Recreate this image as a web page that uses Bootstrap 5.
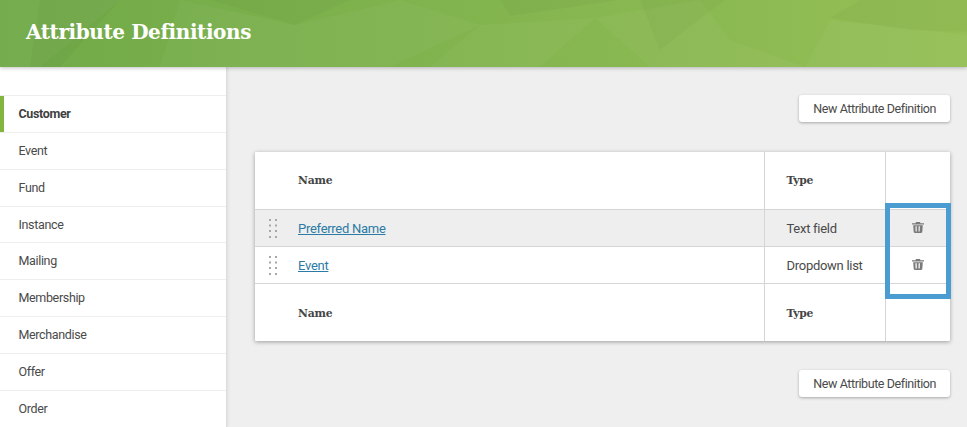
<!DOCTYPE html>
<html lang="en"><head><meta charset="utf-8"><title>Attribute Definitions</title>
<link href="https://cdn.jsdelivr.net/npm/bootstrap@5.3.0/dist/css/bootstrap.min.css" rel="stylesheet">
<style>
html,body{height:427px;overflow:hidden}
body{background:#efefef;font-family:Roboto,sans-serif;font-size:13px;color:#4a4a4a}
.hero{height:67px;position:relative;overflow:hidden;background:linear-gradient(90deg,#70aa48,#95bf55);box-shadow:0 1px 4px rgba(0,0,0,.25);z-index:3}
.hero svg{position:absolute;inset:0}
.hero h1{position:relative;margin:0;padding:17px 0 0 26px;font:700 20px/30px "DejaVu Serif",serif;color:#fff;letter-spacing:-.41px;white-space:nowrap}
.shell{height:360px;overflow:hidden}
.side{width:227px;flex:none;background:#fff;border-right:1px solid #ddd;box-shadow:1px 0 3px rgba(0,0,0,.08);padding-top:28px}
.side .list-group-item{height:36.86px;padding:0 0 0 18.5px;line-height:36.5px;font-size:12.5px;letter-spacing:-.35px;color:#4a4a4a;border:0;border-top:1px solid #eee;border-radius:0;background:#fff}
.side .list-group-item.now{font-weight:700;color:#3f3f3f;box-shadow:inset 4px 0 0 #82b440}
.main{flex:1;padding:28px 17px 0 28px;position:relative}
.act{height:27px;padding:0 14px;font:12.5px/27px Roboto,sans-serif;letter-spacing:-.41px;color:#4a4a4a;background:#fff;border:0;border-radius:3px;box-shadow:0 1px 3px rgba(0,0,0,.3)}
.sheet{margin:30px 0 29px;background:#fff;box-shadow:0 1px 4px rgba(0,0,0,.35);border-radius:1px}
.sheet .table{margin:0;--bs-table-bg:transparent;border-collapse:collapse;table-layout:fixed;color:#4a4a4a;font-size:13px;letter-spacing:-.28px}
.sheet th,.sheet td{padding:3px 0 0;border:0;border-left:1px solid #d5d5d5;vertical-align:middle;background:transparent;box-shadow:none}
.sheet tr>*:first-child,.sheet tr>*:nth-child(2){border-left:0}
.sheet thead tr{height:57px;border-bottom:1px solid #d5d5d5}
.sheet tfoot tr{height:58px}
.sheet tbody tr{height:37px;border-bottom:1px solid #d5d5d5}
.sheet th{padding-top:1px;font:700 10.8px "DejaVu Serif",serif;color:#444;letter-spacing:-.2px}
.sheet tfoot th{padding-top:2px}
.sheet tr>*:nth-child(3){padding-left:22px}
.sheet tbody tr.lit{background:#eee}
.sheet a{color:#2b7ba5}
.bin{display:block;margin:-4px auto 0}
.grip{display:block;margin:-1px auto 0 14px}
.mark-box{position:absolute;left:658px;top:136px;width:66px;height:96px;border:5px solid #4b9cd0;pointer-events:none}
</style></head>
<body>
<header class="hero">
<svg width="967" height="67" viewBox="0 0 967 67" aria-hidden="true">
<g fill="#fff" fill-opacity=".035">
<polygon points="0,0 120,0 40,67 0,67"/><polygon points="180,0 295,25 270,67 160,67"/>
<polygon points="295,25 400,0 480,25 390,67 270,67"/><polygon points="595,18 700,0 730,40 805,67 650,67"/>
<polygon points="830,20 967,35 967,67 805,67"/><polygon points="480,25 595,18 540,67 430,67"/>
</g>
<g fill="#000" fill-opacity=".025">
<polygon points="210,0 350,0 295,25"/><polygon points="500,0 620,0 510,16"/><polygon points="640,0 725,0 660,50"/>
<polygon points="860,0 967,0 967,32 910,30 830,18"/><polygon points="40,0 120,0 60,67 30,67"/>
</g>
</svg>
<h1>Attribute Definitions</h1>
</header>
<div class="d-flex shell">
<nav class="side">
<div class="list-group">
<a class="list-group-item now" href="#">Customer</a>
<a class="list-group-item" href="#">Event</a>
<a class="list-group-item" href="#">Fund</a>
<a class="list-group-item" href="#">Instance</a>
<a class="list-group-item" href="#">Mailing</a>
<a class="list-group-item" href="#">Membership</a>
<a class="list-group-item" href="#">Merchandise</a>
<a class="list-group-item" href="#">Offer</a>
<a class="list-group-item" href="#">Order</a>
</div>
</nav>
<main class="main">
<div class="d-flex justify-content-end"><button class="btn act" type="button">New Attribute Definition</button></div>
<div class="sheet">
<table class="table">
<colgroup><col style="width:43px"><col style="width:466px"><col style="width:121px"><col></colgroup>
<thead><tr><th></th><th>Name</th><th>Type</th><th></th></tr></thead>
<tbody>
<tr class="lit"><td><svg class="grip" width="8" height="19" viewBox="0 0 8 19" fill="#a8a8a8"><rect x="0" y="0" width="2" height="2"/><rect x="6" y="0" width="2" height="2"/><rect x="0" y="5.5" width="2" height="2"/><rect x="6" y="5.5" width="2" height="2"/><rect x="0" y="11" width="2" height="2"/><rect x="6" y="11" width="2" height="2"/><rect x="0" y="17" width="2" height="2"/><rect x="6" y="17" width="2" height="2"/></svg></td><td><a href="#">Preferred Name</a></td><td>Text field</td><td><svg class="bin" width="12" height="11" viewBox="0 0 12 11" fill="#7a7a7a"><path d="M4 0h4l.5 1.2H12v1.4H0V1.2h3.5zM1.2 3.2h9.6l-.5 6.6c0 .7-.5 1.2-1.2 1.2H2.9c-.7 0-1.2-.5-1.2-1.2zm2.2 1 .2 5.4h1.2l-.1-5.4zm3.2 0-.1 5.4h1.2l.2-5.4z"/></svg></td></tr>
<tr><td><svg class="grip" width="8" height="19" viewBox="0 0 8 19" fill="#a8a8a8"><rect x="0" y="0" width="2" height="2"/><rect x="6" y="0" width="2" height="2"/><rect x="0" y="5.5" width="2" height="2"/><rect x="6" y="5.5" width="2" height="2"/><rect x="0" y="11" width="2" height="2"/><rect x="6" y="11" width="2" height="2"/><rect x="0" y="17" width="2" height="2"/><rect x="6" y="17" width="2" height="2"/></svg></td><td><a href="#">Event</a></td><td>Dropdown list</td><td><svg class="bin" width="12" height="11" viewBox="0 0 12 11" fill="#7a7a7a"><path d="M4 0h4l.5 1.2H12v1.4H0V1.2h3.5zM1.2 3.2h9.6l-.5 6.6c0 .7-.5 1.2-1.2 1.2H2.9c-.7 0-1.2-.5-1.2-1.2zm2.2 1 .2 5.4h1.2l-.1-5.4zm3.2 0-.1 5.4h1.2l.2-5.4z"/></svg></td></tr>
</tbody>
<tfoot><tr><th></th><th>Name</th><th>Type</th><th></th></tr></tfoot>
</table>
</div>
<div class="d-flex justify-content-end"><button class="btn act" type="button">New Attribute Definition</button></div>
<div class="mark-box"></div>
</main>
</div>
<script src="https://cdn.jsdelivr.net/npm/bootstrap@5.3.0/dist/js/bootstrap.bundle.min.js"></script>
</body></html>
